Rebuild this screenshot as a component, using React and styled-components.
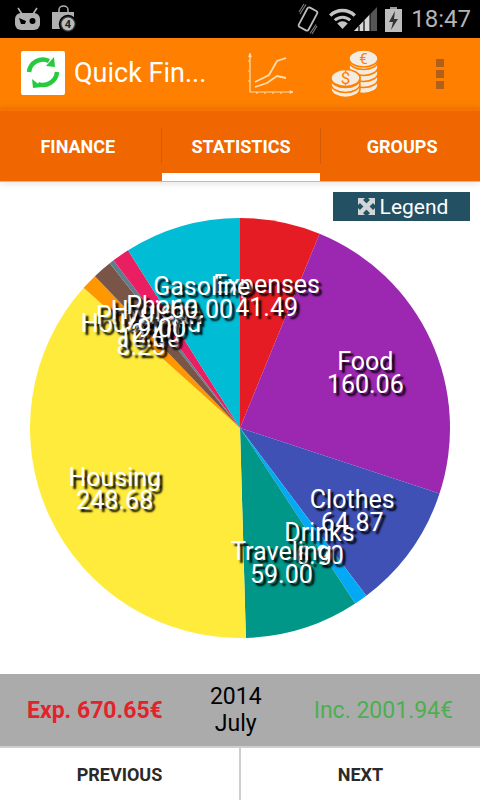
import React from 'react'
import styled, { createGlobalStyle } from 'styled-components'

const GlobalStyle = createGlobalStyle`
html, body {
  margin: 0;
  padding: 0;
  background: #fff;
  font-family: Roboto, "Liberation Sans", sans-serif;
}
`

const Page = styled.div`
width: 480px;
height: 800px;
display: flex;
flex-direction: column;
overflow: hidden;
background: #fff;
`

// --------------------------
const StatusBar = styled.div`
height: 38px;
flex: none;
background: #000;
display: flex;
align-items: center;
justify-content: space-between;
padding: 0 9px 0 14px;
box-sizing: border-box;
`

const StatusGroup = styled.div`
display: flex;
align-items: center;
gap: ${(p) => p.$gap || 0}px;
`

const StatusIcon = styled.div`
display: flex;
margin-left: ${(p) => p.$left || 0}px;
`

const Clock = styled.span`
color: #b4b4b4;
font-size: 24px;
line-height: 40px;
margin-left: 9px;
`

const ActionBar = styled.div`
height: 69px;
flex: none;
background: #ff8000;
display: flex;
align-items: center;
padding-left: 21px;
box-sizing: border-box;
`

const AppIcon = styled.div`
width: 44px;
height: 44px;
background: #fff;
border-radius: 2px;
display: flex;
align-items: center;
justify-content: center;
margin-top: 1px;
`

const Title = styled.div`
width: 173px;
padding-left: 9px;
box-sizing: border-box;
color: #fff;
font-size: 27px;
white-space: nowrap;
`

const ActionIcon = styled.div`
display: flex;
margin-left: ${(p) => p.$left}px;
margin-top: 2px;
`

const Dots = styled.div`
display: flex;
flex-direction: column;
gap: 3px;
margin-left: 54px;
margin-top: 2px;
`

const Dot = styled.div`
width: 8px;
height: 8px;
background: #b0601a;
`

const TabBar = styled.div`
height: 75px;
flex: none;
background: #f06600;
border-top: 4px solid #f57300;
border-bottom: 1px solid #bdbdbd;
box-sizing: border-box;
display: flex;
position: relative;
z-index: 1;
box-shadow: 0 1px 8px rgba(0, 0, 0, 0.12);
`

const Tab = styled.div`
flex: ${(p) => p.$grow};
display: flex;
align-items: center;
justify-content: center;
color: #fff;
font-size: 18px;
font-weight: 700;
padding: 0 ${(p) => p.$right || 0}px 0 ${(p) => p.$left || 0}px;
position: relative;
border-left: ${(p) => (p.$divider ? '1px' : '0')} solid transparent;

&::before {
  content: '';
  display: ${(p) => (p.$divider ? 'block' : 'none')};
  position: absolute;
  left: -1px;
  top: 17px;
  height: 36px;
  width: 1px;
  background: #d45c08;
}

&::after {
  content: '';
  display: ${(p) => (p.$active ? 'block' : 'none')};
  position: absolute;
  left: 0;
  right: 0;
  bottom: 0;
  height: 8px;
  background: #fff;
}
`

const ChartArea = styled.div`
flex: 1;
position: relative;
display: flex;
align-items: center;
justify-content: center;
`

const LegendButton = styled.div`
position: absolute;
top: 10px;
right: 10px;
width: 137px;
height: 29px;
background: #235062;
color: #fff;
font-size: 21px;
display: flex;
align-items: center;
justify-content: center;
gap: 5px;
padding-left: 3px;
box-sizing: border-box;
z-index: 2;
`

const Pie = styled.div`
width: 420px;
height: 420px;
position: relative;
`

const PieSvg = styled.svg`
display: block;
`

const SliceLabel = styled.div`
position: absolute;
transform: translate(-50%, calc(-50% + 3px));
color: #fff;
font-size: 25px;
line-height: 23px;
text-align: center;
white-space: nowrap;
text-shadow: 3px 3px 2px #000;
`

const Summary = styled.div`
height: 72px;
flex: none;
background: #ababab;
display: flex;
align-items: center;
justify-content: space-between;
padding: 0 27px;
box-sizing: border-box;
`

const Amount = styled.div`
font-size: 23px;
color: ${(p) => p.$color};
font-weight: ${(p) => (p.$bold ? 700 : 400)};
`

const Period = styled.div`
color: #000;
font-size: 23px;
line-height: 27px;
text-align: center;
margin-right: 5px;
`

const BottomBar = styled.div`
height: 54px;
flex: none;
border-top: 2px solid #cfcfcf;
box-sizing: border-box;
display: flex;
background: #fff;
`

const NavButton = styled.div`
flex: 1;
display: flex;
align-items: center;
justify-content: center;
color: #2a2a2a;
font-size: 18px;
font-weight: 700;
border-left: ${(p) => (p.$divider ? '2px solid #cfcfcf' : 'none')};
`

// --------------------------
const slices = [
  { name: 'Expenses', value: 41.49, color: '#e51c23' },
  { name: 'Food', value: 160.06, color: '#9c27b0' },
  { name: 'Clothes', value: 64.87, color: '#3f51b5' },
  { name: 'Drinks', value: 6.9, color: '#03a9f4' },
  { name: 'Traveling', value: 59.0, color: '#009688' },
  { name: 'Housing', value: 248.68, color: '#ffeb3b' },
  { name: 'Household', value: 8.25, color: '#ff9800' },
  { name: 'Physician', value: 10.0, color: '#795548' },
  { name: 'Hygiene', value: 2.4, color: '#607d8b' },
  { name: 'Phone', value: 9.0, color: '#e91e63' },
  { name: 'Gasoline', value: 60.0, color: '#00bcd4' },
]

const RADIUS = 210
const total = slices.reduce((sum, s) => sum + s.value, 0)

const point = (deg, r) => {
  const rad = (deg * Math.PI) / 180
  return [RADIUS + r * Math.sin(rad), RADIUS - r * Math.cos(rad)]
}

let angle = 0
const pieData = slices.map((s) => {
  const sweep = (s.value / total) * 360
  const start = angle
  angle += sweep
  const [x1, y1] = point(start, RADIUS)
  const [x2, y2] = point(start + sweep, RADIUS)
  const [lx, ly] = point(start + sweep / 2, 138)
  return {
    ...s,
    lx,
    ly,
    d: `M${RADIUS} ${RADIUS}L${x1} ${y1}A${RADIUS} ${RADIUS} 0 ${sweep > 180 ? 1 : 0} 1 ${x2} ${y2}Z`,
  }
})

// --------------------------
const CidIcon = () => (
  <svg width="27" height="24" viewBox="0 0 27 24">
    <path d="M4 1l4 6M23 1l-4 6" stroke="#b0b0b0" strokeWidth="1.6" />
    <rect x="1" y="6" width="25" height="17" rx="6" fill="#b0b0b0" />
    <path d="M5 11l7 3-1 3H7z" fill="#000" />
    <circle cx="18.5" cy="14" r="3" fill="#000" />
  </svg>
)

const BagIcon = () => (
  <svg width="25" height="28" viewBox="0 0 25 28">
    <path d="M7 7V4.5a4.5 3.5 0 0 1 9 0V7" fill="none" stroke="#b0b0b0" strokeWidth="1.5" />
    <rect x="0" y="7" width="22" height="17" fill="#b0b0b0" />
    <circle cx="16" cy="19" r="8.5" fill="#333" stroke="#000" strokeWidth="1.5" />
    <circle cx="16" cy="19" r="6.5" fill="#bbb" />
    <text x="16" y="23" fontSize="11" fontWeight="700" textAnchor="middle" fill="#222" fontFamily="Roboto">4</text>
  </svg>
)

const VibrateIcon = () => (
  <svg width="22" height="32" viewBox="0 0 22 32">
    <rect x="5.5" y="5" width="11" height="22" rx="2" transform="rotate(28 11 16)" fill="none" stroke="#bdbdbd" strokeWidth="1.8" />
    <path d="M7 1L2 9M9 1.5L3 11M15 31l5-8M13 30.5l6-9" stroke="#777" strokeWidth="1.2" />
  </svg>
)

const WifiIcon = () => (
  <svg width="29" height="22" viewBox="0 0 29 22">
    <path d="M14.5 21L9.3 15.5a7.4 7.4 0 0 1 10.4 0z" fill="#c4c4c4" />
    <path d="M6.8 12.3a11 11 0 0 1 15.4 0" fill="none" stroke="#c4c4c4" strokeWidth="3" />
    <path d="M2.2 7.6a17.5 17.5 0 0 1 24.6 0" fill="none" stroke="#c4c4c4" strokeWidth="3.4" />
  </svg>
)

const SignalIcon = () => (
  <svg width="23" height="24" viewBox="0 0 23 24">
    <path d="M0 24L23 0v24z" fill="#555" />
    <path d="M0 24L16 7.3V24z" fill="#d8d8d8" />
    <path d="M5 19v5M10 13.5v10.5" stroke="#000" strokeWidth="1.2" />
    <path d="M16 7v17" stroke="#000" strokeWidth="1" />
  </svg>
)

const BatteryIcon = () => (
  <svg width="17" height="25" viewBox="0 0 17 25">
    <path d="M5 0h7v2H5z" fill="#9a9a9a" />
    <rect x="0" y="2" width="17" height="23" fill="#bdbdbd" />
    <path d="M10 4L4 15h4l-2 8 7-11H9z" fill="#333" />
  </svg>
)

const RefreshIcon = () => (
  <svg width="44" height="44" viewBox="0 0 44 44">
    <path d="M8 21A14 14 0 0 1 28 10" fill="none" stroke="#27c93f" strokeWidth="4.5" />
    <path d="M33 6l1 10-9 -1z" fill="#27c93f" />
    <path d="M36 21A14 14 0 0 1 17 33" fill="none" stroke="#27c93f" strokeWidth="4.5" />
    <path d="M11 28l1 9 9-1z" fill="#27c93f" />
  </svg>
)

const TrendIcon = () => (
  <svg width="46" height="46" viewBox="0 0 46 46" fill="none" stroke="#ffdcae">
    <path d="M3 3v38h45" strokeWidth="1.2" />
    <path d="M1.5 6L3 2l1.5 4zM43 39.5l3 1.5-3 1.5z" fill="#ffdcae" strokeWidth="0.5" />
    <path d="M1 10h2M1 20h2M1 30h2M10 41v2M18 41v2M26 41v2M34 41v2" strokeWidth="1" />
    <path d="M8 31l14-7 8-14 9-3" strokeWidth="1.8" />
    <path d="M8 36l12-4 10-7 9 2" strokeWidth="1.8" />
  </svg>
)

const CoinLayer = ({ cx, cy }) => (
  <ellipse cx={cx} cy={cy} rx="14.5" ry="8.5" fill="#f4ece0" stroke="#ff8000" strokeWidth="1.6" />
)

const CoinsIcon = () => (
  <svg width="52" height="50" viewBox="0 0 52 50">
    {[36, 30, 24, 18, 12].map((y) => <CoinLayer key={y} cx={33.5} cy={y} />)}
    <CoinLayer cx={33.5} cy={9.5} />
    <text x="33.5" y="15" fontSize="15" textAnchor="middle" fill="#ff8000" fontFamily="Roboto">€</text>
    {[40, 35, 30].map((y) => <CoinLayer key={y} cx={15.5} cy={y} />)}
    <CoinLayer cx={15.5} cy={29} />
    <text x="15.5" y="35" fontSize="17" textAnchor="middle" fill="#ff8000" fontFamily="Roboto">$</text>
  </svg>
)

const ExpandIcon = () => (
  <svg width="17" height="17" viewBox="0 0 17 17">
    <path d="M3 3l11 11M14 3L3 14" stroke="#d2d6d8" strokeWidth="4.5" />
    <path d="M0 0h7L0 7zM17 0v7l-7-7zM0 17v-7l7 7zM17 17h-7l7-7z" fill="#d2d6d8" />
  </svg>
)

const App = () => {
  return (
    <Page>
      <GlobalStyle />
      <StatusBar>
        <StatusGroup $gap={11}>
          <CidIcon />
          <BagIcon />
        </StatusGroup>
        <StatusGroup>
          <StatusIcon><VibrateIcon /></StatusIcon>
          <StatusIcon $left={9}><WifiIcon /></StatusIcon>
          <StatusIcon $left={-3}><SignalIcon /></StatusIcon>
          <StatusIcon $left={8}><BatteryIcon /></StatusIcon>
          <Clock>18:47</Clock>
        </StatusGroup>
      </StatusBar>
      <ActionBar>
        <AppIcon>
          <RefreshIcon />
        </AppIcon>
        <Title>Quick Fin...</Title>
        <ActionIcon $left={9}><TrendIcon /></ActionIcon>
        <ActionIcon $left={37}><CoinsIcon /></ActionIcon>
        <Dots>
          <Dot />
          <Dot />
          <Dot />
        </Dots>
      </ActionBar>
      <TabBar>
        <Tab $grow={159} $right={5}>FINANCE</Tab>
        <Tab $grow={162} $divider $active>STATISTICS</Tab>
        <Tab $grow={159} $divider $left={3}>GROUPS</Tab>
      </TabBar>
      <ChartArea>
        <LegendButton>
          <ExpandIcon />
          Legend
        </LegendButton>
        <Pie>
          <PieSvg width="420" height="420" viewBox="0 0 420 420">
            {pieData.map((s) => (
              <path key={s.name} d={s.d} fill={s.color} />
            ))}
          </PieSvg>
          {pieData.map((s) => (
            <SliceLabel key={s.name} style={{ left: s.lx, top: s.ly }}>
              {s.name}
              <br />
              {s.value.toFixed(2)}
            </SliceLabel>
          ))}
        </Pie>
      </ChartArea>
      <Summary>
        <Amount $color="#e2232b" $bold>Exp. 670.65€</Amount>
        <Period>
          2014
          <br />
          July
        </Period>
        <Amount $color="#4caf50">Inc. 2001.94€</Amount>
      </Summary>
      <BottomBar>
        <NavButton>PREVIOUS</NavButton>
        <NavButton $divider>NEXT</NavButton>
      </BottomBar>
    </Page>
  )
}

export default App
